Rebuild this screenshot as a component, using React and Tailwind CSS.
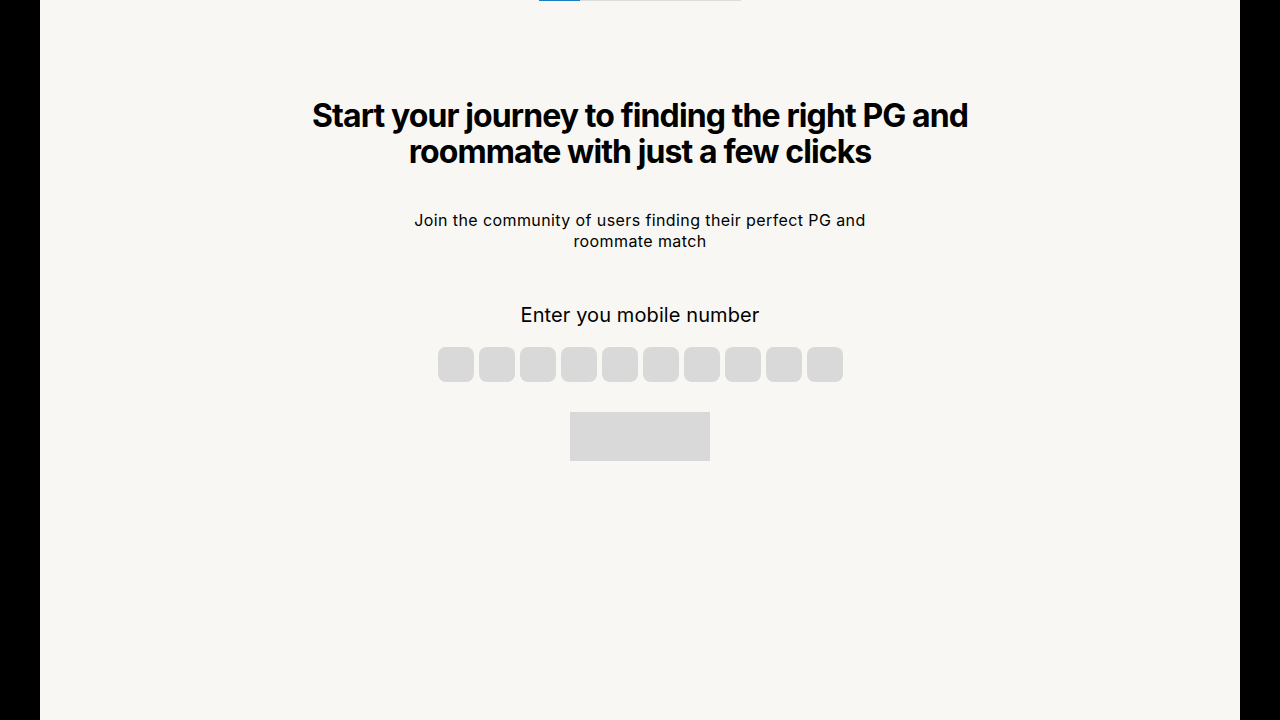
import React from "react";

export default function App() {
  return (
    <div className="w-[1280px] h-[720px] bg-black flex justify-center overflow-hidden" style={{ fontFamily: "Inter, 'Noto Sans', sans-serif" }}>
      <div className="w-[1200px] h-full bg-[#f8f7f3] flex flex-col items-center">
        <div className="flex w-[202px] h-[1px]">
          <div className="w-[41px] bg-[#1a7fc4]" />
          <div className="flex-1 bg-[#dcdcdc]" />
        </div>
        <h1 className="mt-[97px] w-[700px] text-center text-[32px] leading-[36px] font-bold text-black tracking-[-0.9px]">
          Start your journey to finding the right PG and roommate with just a few clicks
        </h1>
        <p className="mt-[40px] w-[480px] text-center text-[16px] leading-[21px] text-black tracking-[0.4px]">
          Join the community of users finding their perfect PG and roommate match
        </p>
        <p className="mt-[49px] text-[20px] leading-[28px] text-black tracking-[0.1px]">Enter you mobile number</p>
        <div className="mt-[18px] flex gap-[5px]">
          {Array.from({ length: 10 }).map((_, i) => (
            <div key={i} className="w-[36px] h-[35px] rounded-[8px] bg-[#d9d9d9]" />
          ))}
        </div>
        <div className="mt-[30px] w-[140px] h-[49px] bg-[#d9d9d9]" />
      </div>
    </div>
  );
}
